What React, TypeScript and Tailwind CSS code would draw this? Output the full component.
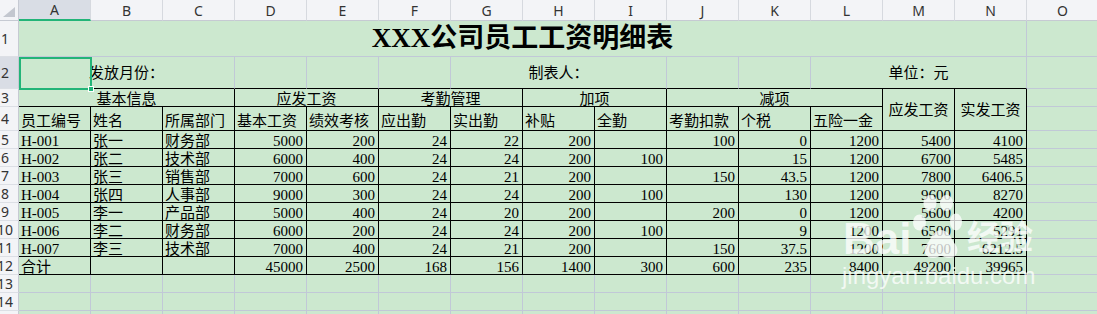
import React from 'react';

const cols = ['A', 'B', 'C', 'D', 'E', 'F', 'G', 'H', 'I', 'J', 'K', 'L', 'M', 'N', 'O'];

const data: string[][] = [
  ['H-001', '张一', '财务部', '5000', '200', '24', '22', '200', '', '100', '0', '1200', '5400', '4100'],
  ['H-002', '张二', '技术部', '6000', '400', '24', '24', '200', '100', '', '15', '1200', '6700', '5485'],
  ['H-003', '张三', '销售部', '7000', '600', '24', '21', '200', '', '150', '43.5', '1200', '7800', '6406.5'],
  ['H-004', '张四', '人事部', '9000', '300', '24', '24', '200', '100', '', '130', '1200', '9600', '8270'],
  ['H-005', '李一', '产品部', '5000', '400', '24', '20', '200', '', '200', '0', '1200', '5600', '4200'],
  ['H-006', '李二', '财务部', '6000', '200', '24', '24', '200', '100', '', '9', '1200', '6500', '5291'],
  ['H-007', '李三', '技术部', '7000', '400', '24', '21', '200', '', '150', '37.5', '1200', '7600', '6212.5'],
  ['合计', '', '', '45000', '2500', '168', '156', '1400', '300', '600', '235', '8400', '49200', '39965'],
];

const heads4 = ['员工编号', '姓名', '所属部门', '基本工资', '绩效考核', '应出勤', '实出勤', '补贴', '全勤', '考勤扣款', '个税', '五险一金'];

const RG = 'border-r border-r-[#c1c8d7]';
const RK = 'border-r border-r-black';
const BG = 'border-b border-b-[#c1c8d7]';
const BK = 'border-b border-b-black';

const BOT = 'items-end leading-[14px] pb-[0px]';
const MID = 'items-center leading-[16px]';
const LEFT = 'justify-start pl-[2px]';
const RIGHT = 'justify-end pr-[3px]';
const CENTER = 'justify-center';

function C({ cls, children }: { cls: string; children?: React.ReactNode }) {
  return <div className={'flex min-w-0 whitespace-nowrap ' + cls}>{children}</div>;
}

function RowHead({ n, sel }: { n: number; sel?: boolean }) {
  return (
    <div
      className={
        "flex items-center overflow-hidden border-r border-r-[#c6cad3] border-b border-b-[#dcdfe5] font-['Noto_Sans','Liberation_Sans',sans-serif] text-[14px] text-[#333] " +
        (sel ? 'bg-[#d9dde5]' : 'bg-[#f3f4f7]')
      }
    >
      <span className="shrink-0 w-[28px] -ml-[9px] text-center leading-none">{n}</span>
    </div>
  );
}

export default function App() {
  return (
    <div className="relative w-[1097px] h-[314px] overflow-hidden bg-[#cce8cf] font-['Liberation_Serif','Noto_Sans_CJK_SC',serif] text-[15px] text-black">
      <div className="grid grid-cols-[19px_repeat(15,72px)] grid-rows-[21px_36px_32px_18px_24px_repeat(11,18px)]">
        {/* header row */}
        <div className="relative bg-[#f3f4f7] border-r border-r-[#c6cad3] border-b border-b-[#c6cad3]">
          <svg className="absolute left-[3px] top-[7px]" width="12" height="10" viewBox="0 0 12 10">
            <polygon points="12,0 12,10 0,10" fill="#c3c7cf" />
          </svg>
        </div>
        {cols.map((c, i) => (
          <div
            key={c}
            className={
              "flex items-center justify-center font-['Noto_Sans','Liberation_Sans',sans-serif] text-[14px] text-[#333] border-r border-r-[#d6d9df] " +
              (i === 0 ? 'bg-[#d9dde5] border-b-2 border-b-[#22b478]' : 'bg-[#f3f4f7] border-b border-b-[#c6cad3]')
            }
          >
            {c}
          </div>
        ))}

        {/* row 1 */}
        <RowHead n={1} />
        <C cls={'col-span-14 ' + RG + ' ' + BG + ' items-center justify-center'}>
          <span className="font-bold text-[27px] leading-none">XXX公司员工工资明细表</span>
        </C>
        <C cls={RG + ' ' + BG} />

        {/* row 2 */}
        <RowHead n={2} sel />
        <C cls={'col-span-3 ' + RG + ' ' + BK + ' ' + MID + ' ' + CENTER}>发放月份：</C>
        <C cls={RG + ' ' + BK} />
        <C cls={RG + ' ' + BK} />
        <C cls={RG + ' ' + BK} />
        <C cls={'col-span-3 ' + RG + ' ' + BK + ' ' + MID + ' ' + CENTER}>制表人：</C>
        <C cls={RG + ' ' + BK} />
        <C cls={RG + ' ' + BK} />
        <C cls={'col-span-3 ' + RG + ' ' + BK + ' ' + MID + ' ' + CENTER}>单位：元</C>
        <C cls={RG + ' ' + BG} />

        {/* row 3 */}
        <RowHead n={3} />
        <C cls={'col-span-3 ' + RK + ' ' + BK + ' ' + BOT + ' ' + CENTER}>基本信息</C>
        <C cls={'col-span-2 ' + RK + ' ' + BK + ' ' + BOT + ' ' + CENTER}>应发工资</C>
        <C cls={'col-span-2 ' + RK + ' ' + BK + ' ' + BOT + ' ' + CENTER}>考勤管理</C>
        <C cls={'col-span-2 ' + RK + ' ' + BK + ' ' + BOT + ' ' + CENTER}>加项</C>
        <C cls={'col-span-3 ' + RK + ' ' + BK + ' ' + BOT + ' ' + CENTER}>减项</C>
        <C cls={'row-span-2 ' + RK + ' ' + BK + ' ' + MID + ' ' + CENTER}>应发工资</C>
        <C cls={'row-span-2 ' + RK + ' ' + BK + ' ' + MID + ' ' + CENTER}>实发工资</C>
        <C cls={RG + ' ' + BG} />

        {/* row 4 */}
        <RowHead n={4} />
        {heads4.map((h, i) => (
          <C key={i} cls={RK + ' ' + BK + ' items-end leading-[14px] pb-[2px] ' + LEFT}>
            {h}
          </C>
        ))}
        <C cls={RG + ' ' + BG} />

        {/* data rows 5-12 */}
        {data.map((row, ri) => (
          <React.Fragment key={ri}>
            <RowHead n={ri + 5} />
            {row.map((v, ci) => (
              <C key={ci} cls={RK + ' ' + BK + ' ' + BOT + ' ' + (ci < 3 ? LEFT : RIGHT)}>
                {v}
              </C>
            ))}
            <C cls={RG + ' ' + BG} />
          </React.Fragment>
        ))}

        {/* empty rows 13-15 */}
        {[13, 14, 15].map((n) => (
          <React.Fragment key={n}>
            <RowHead n={n} />
            {cols.map((c) => (
              <C key={c} cls={RG + ' ' + BG} />
            ))}
          </React.Fragment>
        ))}
      </div>

      {/* selection box on A2 */}
      <div className="absolute left-[19px] top-[57px] w-[73px] h-[33px] border-2 border-[#22b478] pointer-events-none" />
      <div className="absolute left-[88px] top-[86px] w-[6px] h-[6px] bg-[#22b478] border border-white pointer-events-none" />

      {/* Baidu watermark */}
      <div className="absolute inset-0 pointer-events-none">
        <span className="absolute left-[843px] top-[217px] font-['Liberation_Sans',sans-serif] font-bold text-[44px] leading-none text-white/75">
          Bai
        </span>
        <svg className="absolute left-[911px] top-[195px]" width="52" height="66" viewBox="0 0 52 66">
          <g fill="#ffffff" fillOpacity="0.75">
            <ellipse cx="19" cy="8" rx="6.5" ry="8" />
            <ellipse cx="35.5" cy="8" rx="6.5" ry="8" />
            <ellipse cx="8.5" cy="27.5" rx="6.5" ry="8" />
            <ellipse cx="45" cy="27" rx="6" ry="8.5" />
            <path d="M30 35 C22 35 20 44 16 49 C11 55 14 63 22 63 C26 63 28 61 30 61 C32 61 34 63 38 63 C46 63 49 55 44 49 C40 44 38 35 30 35 Z" />
          </g>
        </svg>
        <span className="absolute left-[967px] top-[219px] font-['Noto_Sans_CJK_SC',sans-serif] font-bold text-[33px] leading-none text-white/75">
          经验
        </span>
        <span className="absolute left-[842px] top-[264px] font-['Liberation_Sans',sans-serif] text-[24px] leading-none text-white/75">
          jingyan.baidu.com
        </span>
      </div>
    </div>
  );
}
